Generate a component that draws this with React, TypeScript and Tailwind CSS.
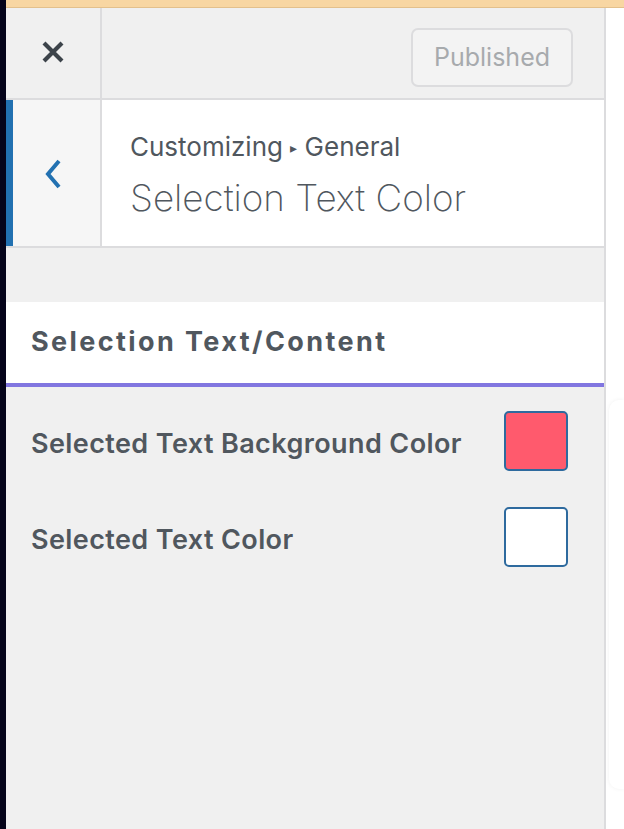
import React from "react";

const rows = [
  { label: "Selected Text Background Color", color: "#ff5a6d" },
  { label: "Selected Text Color", color: "#ffffff" },
];

const App: React.FC = () => {
  return (
    <div
      className="flex h-[829px] w-[624px] overflow-hidden bg-white text-[#50575e]"
      style={{ fontFamily: "Inter, 'Noto Sans', sans-serif" }}
    >
      {/* dark desktop edge */}
      <div className="w-[6px] shrink-0 bg-[#05041a]" />

      <div className="flex flex-1 flex-col">
        {/* notice strip */}
        <div className="h-[8px] shrink-0 border-b border-[#e3c08c] bg-[#f8d6a2]" />

        <div className="flex flex-1">
          {/* customizer panel */}
          <div className="flex w-[600px] shrink-0 flex-col border-r-2 border-[#dcdcde] bg-[#f0f0f0]">
            {/* header */}
            <div className="flex h-[92px] shrink-0 border-b-2 border-[#dcdcde]">
              <div className="flex w-[96px] items-center justify-center border-r-2 border-[#dcdcde] pb-[2px]">
                <svg width="24" height="24" viewBox="0 0 24 24">
                  <path
                    d="M3 3 L21 21 M21 3 L3 21"
                    stroke="#3c434a"
                    strokeWidth="4.2"
                    strokeLinecap="butt"
                  />
                </svg>
              </div>
              <div className="flex flex-1 items-start justify-end pr-[31px] pt-[20px]">
                <div className="flex h-[59px] w-[162px] items-center justify-center rounded-[7px] border-2 border-[#dcdcde] bg-[#f3f3f3] text-[25px] text-[#a7aaad]">
                  Published
                </div>
              </div>
            </div>

            {/* back / title row */}
            <div className="flex h-[148px] shrink-0 border-b-2 border-[#dcdcde]">
              <div className="w-[7px] bg-[#2271b1]" />
              <div className="flex w-[89px] items-center justify-center border-r-2 border-[#dcdcde] bg-[#f6f6f6]">
                <svg width="18" height="32" viewBox="0 0 18 32" className="ml-[-8px] mt-[2px]">
                  <path
                    d="M15 3 L4 16 L15 29"
                    stroke="#2271b1"
                    strokeWidth="4"
                    fill="none"
                  />
                </svg>
              </div>
              <div className="flex flex-1 flex-col justify-center bg-white pl-[28px] pt-[4px]">
                <div className="text-[26px] leading-[34px] text-[#50575e]">
                  Customizing <span className="text-[14px] align-[3px]">▸</span> General
                </div>
                <div className="mt-[10px] text-[36.8px] font-extralight leading-[46px] text-[#50575e]">
                  Selection Text Color
                </div>
              </div>
            </div>

            {/* spacer */}
            <div className="h-[54px] shrink-0" />

            {/* section header */}
            <div className="flex h-[85px] shrink-0 items-center border-b-4 border-[#8176e0] bg-white pl-[25px]">
              <span className="text-[27px] font-bold tracking-[2.4px] text-[#50575e]">
                Selection Text/Content
              </span>
            </div>

            {/* controls */}
            <div className="flex flex-col gap-[36px] pt-[24px] pl-[25px] pr-[36px]">
              {rows.map((row) => (
                <div key={row.label} className="flex h-[60px] items-center justify-between">
                  <span className="pt-[7px] text-[27px] font-semibold tracking-[0.4px] text-[#50575e]">
                    {row.label}
                  </span>
                  <div
                    className="h-[60px] w-[64px] rounded-[5px] border-2 border-[#2e6a9e]"
                    style={{ backgroundColor: row.color }}
                  />
                </div>
              ))}
            </div>
          </div>

          {/* preview edge */}
          <div className="flex flex-1 flex-col bg-white pt-[392px] pb-[40px] pl-[3px]">
            <div className="flex-1 rounded-l-[10px] bg-white shadow-[0_0_4px_rgba(0,0,0,0.06)]" />
          </div>
        </div>
      </div>
    </div>
  );
};

export default App;
